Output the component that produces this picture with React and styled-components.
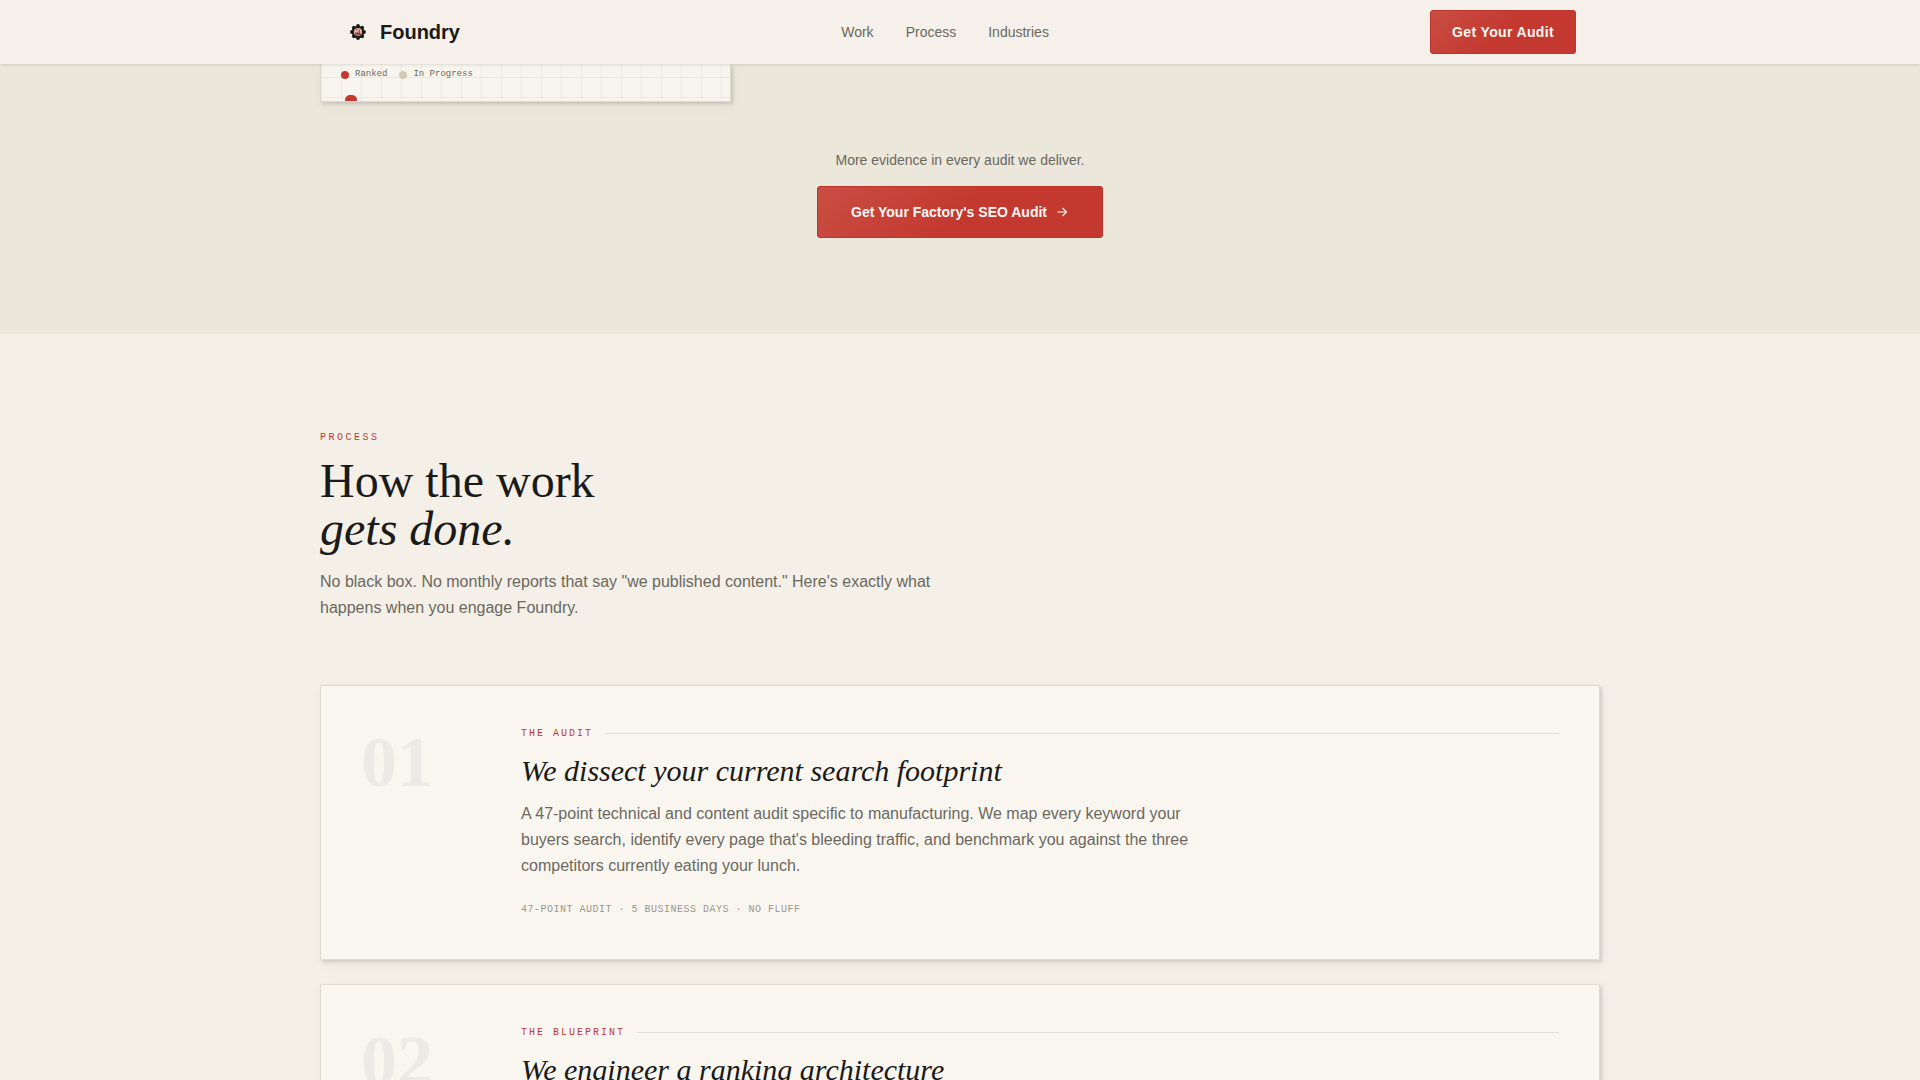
import React from 'react'
import styled, {createGlobalStyle} from 'styled-components'

const steps = [
  {
    number: '01',
    label: 'The Audit',
    title: 'We dissect your current search footprint',
    text: "A 47-point technical and content audit specific to manufacturing. We map every keyword your buyers search, identify every page that's bleeding traffic, and benchmark you against the three competitors currently eating your lunch.",
    tags: '47-point audit · 5 business days · no fluff',
  },
  {
    number: '02',
    label: 'The Blueprint',
    title: 'We engineer a ranking architecture',
  },
]

const Logo = () => (
  <LogoMark viewBox="0 0 28 28" aria-hidden="true">
    {[0, 45, 90, 135, 180, 225, 270, 315].map((angle) => (
      <circle key={angle} cx="14" cy="8" r="1.9" fill="#1a1a18" transform={`rotate(${angle} 14 14)`} />
    ))}
    <circle cx="14" cy="14" r="6.3" fill="#1a1a18" />
    <circle cx="14" cy="14" r="4.1" fill="#dfb5ac" />
    <path d="M11.2 16.6V13.8l1.7 1.1v-1.4l1.7 1.2V11.4h1.3v3.3l.9.5v1.4z" fill="#b5483f" />
    <path d="M11 16.9h6M11.8 11.8l1.6-.8M13 15.6h.9M15.4 15.6h.9" stroke="#3a2220" strokeWidth="0.7" fill="none" />
  </LogoMark>
)

const App = () => {
  return (
    <Page>
      <GlobalStyle />
      <Header>
        <HeaderInner>
          <Brand href="#top"><Logo />Foundry</Brand>
          <Nav>
            <NavLink href="#work">Work</NavLink>
            <NavLink href="#process">Process</NavLink>
            <NavLink href="#industries">Industries</NavLink>
          </Nav>
          <Button>Get Your Audit</Button>
        </HeaderInner>
      </Header>

      <Evidence>
        <Container>
          <ChartCard>
            <Legend>
              <LegendItem $color="#c4392f">Ranked</LegendItem>
              <LegendItem $color="#d2cab5">In Progress</LegendItem>
            </Legend>
            <ChartPoint />
          </ChartCard>
          <Cta>
            <CtaText>More evidence in every audit we deliver.</CtaText>
            <Button $large>
              Get Your Factory's SEO Audit
              <Arrow viewBox="0 0 14 14" aria-hidden="true">
                <path d="M2.5 7h9M7.5 3L11.5 7l-4 4" />
              </Arrow>
            </Button>
          </Cta>
        </Container>
      </Evidence>

      <Process id="process">
        <Container>
          <Eyebrow>Process</Eyebrow>
          <Title>How the work<br /><em>gets done.</em></Title>
          <Intro>
            No black box. No monthly reports that say "we published content." Here's exactly what happens when you engage Foundry.
          </Intro>
          <Steps>
            {steps.map((step) => (
              <Step key={step.number}>
                <StepNumber>{step.number}</StepNumber>
                <div>
                  <StepLabel>{step.label}</StepLabel>
                  <StepTitle>{step.title}</StepTitle>
                  {step.text && <StepText>{step.text}</StepText>}
                  {step.tags && <StepTags>{step.tags}</StepTags>}
                </div>
              </Step>
            ))}
          </Steps>
        </Container>
      </Process>
    </Page>
  )
}

const GlobalStyle = createGlobalStyle`
  * {
    box-sizing: border-box;
    margin: 0;
  }
  body {
    background: #f4efe7;
    color: #1a1a18;
    font-family: 'Liberation Sans', Arial, sans-serif;
  }
`

const Page = styled.div`
  height: 100vh;
  overflow: hidden;
`

const Container = styled.div`
  max-width: 1280px;
  margin: 0 auto;
`

const Header = styled.header`
  position: relative;
  z-index: 1;
  background: #f5f0e9;
  box-shadow: 0 1px 3px rgba(26, 26, 24, 0.12);
`

const HeaderInner = styled(Container)`
  display: flex;
  align-items: center;
  justify-content: space-between;
  padding: 10px 24px;
`

const Brand = styled.a`
  display: flex;
  align-items: center;
  gap: 8px;
  color: #1a1a18;
  font-size: 20px;
  font-weight: 700;
  text-decoration: none;
`

const LogoMark = styled.svg`
  width: 28px;
  height: 28px;
`

const Nav = styled.nav`
  display: flex;
  gap: 32px;
`

const NavLink = styled.a`
  color: #6b6860;
  font-size: 14px;
  text-decoration: none;
`

const Button = styled.button`
  display: inline-flex;
  align-items: center;
  gap: 8px;
  height: ${(props) => (props.$large ? '52px' : '44px')};
  padding: ${(props) => (props.$large ? '0 34px' : '0 22px')};
  border: 0;
  border-radius: 4px;
  background: linear-gradient(135deg, #c94e44 0%, #c4392f 50%, #c4392f 100%);
  box-shadow: inset 0 0 0 1px #c0342b;
  color: #faf7f2;
  font-family: inherit;
  font-size: 14px;
  font-weight: 700;
  letter-spacing: ${(props) => (props.$large ? 'normal' : '0.025em')};
  cursor: pointer;
`

const Arrow = styled.svg`
  width: 14px;
  height: 14px;
  fill: none;
  stroke: currentColor;
  stroke-width: 1.2;
`

const Evidence = styled.section`
  padding-bottom: 96px;
  background: #ebe7da;
`

const ChartCard = styled.div`
  width: 411px;
  height: 38px;
  padding: 4px 20px 0;
  border: 1px solid #dedace;
  border-top: 0;
  background-color: #f8f5ee;
  background-image:
    linear-gradient(to right, #ece9e1 1px, transparent 1px),
    linear-gradient(to bottom, transparent 13px, #ece9e1 13px, #ece9e1 14px, transparent 14px);
  background-size: 20px 20px;
  box-shadow: 2px 2px 3px rgba(26, 26, 24, 0.13), 2px 4px 12px rgba(26, 26, 24, 0.05);
  overflow: hidden;
`

const Legend = styled.div`
  display: flex;
  gap: 12px;
`

const LegendItem = styled.span`
  display: flex;
  gap: 6px;
  color: #6b6860;
  font-family: 'Liberation Mono', 'Courier New', monospace;
  font-size: 9px;
  line-height: 12px;

  &::before {
    content: '';
    width: 8px;
    height: 8px;
    margin-top: 3px;
    border-radius: 50%;
    background: ${(props) => props.$color};
  }
`

const ChartPoint = styled.div`
  width: 12px;
  height: 12px;
  margin: 15px 0 0 4px;
  border-radius: 5px;
  background: #c4392f;
`

const Cta = styled.div`
  display: flex;
  flex-direction: column;
  align-items: center;
  gap: 16px;
  padding-top: 48px;
`

const CtaText = styled.p`
  color: #6b6860;
  font-size: 14px;
  line-height: 20px;
`

const Process = styled.section`
  padding: 96px 0;
`

const Eyebrow = styled.p`
  color: #c4392f;
  font-family: 'Liberation Mono', 'Courier New', monospace;
  font-size: 10px;
  line-height: 15px;
  letter-spacing: 0.25em;
  text-transform: uppercase;
`

const Title = styled.h2`
  margin: 12px 0 16px;
  font-family: 'Liberation Serif', 'Times New Roman', serif;
  font-size: 48px;
  font-weight: 400;
  line-height: 48px;
`

const Intro = styled.p`
  max-width: 640px;
  color: #6b6860;
  font-size: 16px;
  line-height: 26px;
`

const Steps = styled.div`
  display: grid;
  gap: 24px;
  margin-top: 64px;
`

const Step = styled.article`
  display: grid;
  grid-template-columns: 120px 1fr;
  gap: 40px;
  padding: 40px;
  border: 1px solid #dedace;
  background: #f9f6f0;
  box-shadow: 2px 2px 3px rgba(26, 26, 24, 0.13), 2px 4px 12px rgba(26, 26, 24, 0.05);
`

const StepNumber = styled.span`
  color: #edeae5;
  font-family: 'Liberation Serif', 'Times New Roman', serif;
  font-size: 72px;
  font-weight: 700;
  line-height: 72px;
`

const StepLabel = styled.p`
  display: flex;
  align-items: center;
  gap: 12px;
  color: #c4392f;
  font-family: 'Liberation Mono', 'Courier New', monospace;
  font-size: 10px;
  line-height: 15px;
  letter-spacing: 0.2em;
  text-transform: uppercase;

  &::after {
    content: '';
    flex: 1;
    height: 1px;
    background: #e2ded5;
  }
`

const StepTitle = styled.h3`
  margin: 12px 0;
  font-family: 'Liberation Serif', 'Times New Roman', serif;
  font-size: 30px;
  font-style: italic;
  font-weight: 400;
  line-height: 36px;
`

const StepText = styled.p`
  max-width: 680px;
  color: #6b6860;
  font-size: 16px;
  line-height: 26px;
`

const StepTags = styled.p`
  margin-top: 22px;
  color: #9a968d;
  font-family: 'Liberation Mono', 'Courier New', monospace;
  font-size: 10px;
  line-height: 18px;
  letter-spacing: 0.05em;
  text-transform: uppercase;
`

export default App
